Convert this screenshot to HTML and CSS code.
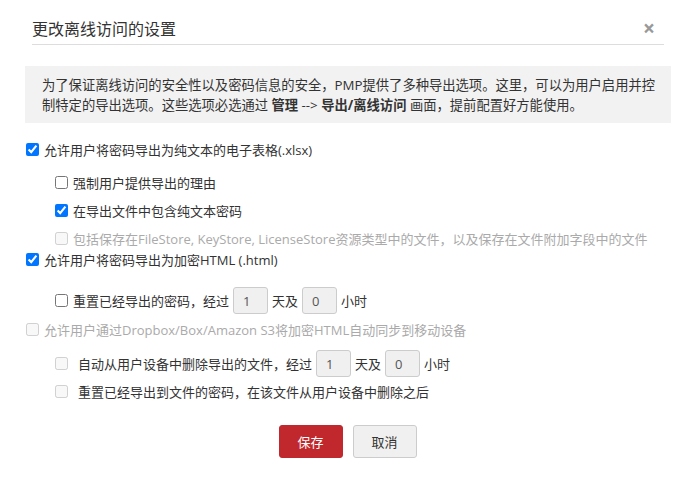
FILE: index.html
```html
<!DOCTYPE html>
<html lang="zh-CN">
<head>
  <meta charset="UTF-8" />
  <meta name="viewport" content="width=device-width, initial-scale=1" />
  <title>更改离线访问的设置</title>
  <link rel="stylesheet" href="styles.css">
</head>
<body>
  <div class="modal">
    <div class="modal-header">
      <span class="modal-title">更改离线访问的设置</span>
      <span class="close">&times;</span>
    </div>

    <div class="info">
      为了保证离线访问的安全性以及密码信息的安全，PMP提供了多种导出选项。这里，可以为用户启用并控<br>制特定的导出选项。这些选项必选通过 <b>管理</b> --&gt; <b>导出/离线访问</b> 画面，提前配置好方能使用。
    </div>

    <div class="options">
      <label class="opt"><input type="checkbox" checked> 允许用户将密码导出为纯文本的电子表格(.xlsx)</label>
      <div class="sub">
        <label class="opt"><input type="checkbox"> 强制用户提供导出的理由</label>
        <label class="opt"><input type="checkbox" checked> 在导出文件中包含纯文本密码</label>
        <label class="opt disabled"><input type="checkbox" disabled> 包括保存在FileStore, KeyStore, LicenseStore资源类型中的文件，以及保存在文件附加字段中的文件</label>
      </div>

      <label class="opt"><input type="checkbox" checked> 允许用户将密码导出为加密HTML (.html)</label>
      <div class="sub sub-reset">
        <label class="opt tall"><input type="checkbox"> 重置已经导出的密码，经过 <input class="num" type="text" value="1"> 天及 <input class="num" type="text" value="0"> 小时</label>
      </div>

      <label class="opt disabled"><input type="checkbox" disabled> 允许用户通过Dropbox/Box/Amazon S3将加密HTML自动同步到移动设备</label>
      <div class="sub sub-mobile">
        <label class="opt tall wide"><input type="checkbox" disabled> 自动从用户设备中删除导出的文件，经过 <input class="num" type="text" value="1"> 天及 <input class="num" type="text" value="0"> 小时</label>
        <label class="opt wide"><input type="checkbox" disabled> 重置已经导出到文件的密码，在该文件从用户设备中删除之后</label>
      </div>
    </div>

    <div class="actions">
      <button class="btn btn-save">保存</button>
      <button class="btn btn-cancel">取消</button>
    </div>
  </div>
</body>
</html>
```

FILE: styles.css
```css
* { box-sizing: border-box; }
html, body {
  margin: 0;
  padding: 0;
  background: #fff;
  color: #333;
  font-family: "Open Sans", "Noto Sans CJK SC", sans-serif;
  font-size: 13px;
}
.modal-header {
  margin: 0 31px 0 32px;
  padding-top: 11px;
  height: 45px;
  display: flex;
  justify-content: space-between;
  align-items: center;
  border-bottom: 1px solid #ddd;
}
.modal-header > * {
  height: 33px;
  display: flex;
  align-items: center;
}
.modal-title {
  font-size: 16px;
  color: #333;
}
.close {
  font-size: 21px;
  font-weight: bold;
  color: #999;
  margin-right: 9px;
  margin-top: 1px;
}
.info {
  margin: 21px 24px 0 25px;
  padding: 9px 10px 8px 17px;
  background: #f2f2f2;
  line-height: 20px;
  font-size: 13.3px;
  color: #333;
}
.info b { font-weight: bold; }
.options {
  margin-top: 16px;
  padding-left: 26px;
  display: flex;
  flex-direction: column;
}
.opt {
  display: flex;
  align-items: center;
  height: 20px;
  white-space: nowrap;
}
.opt input[type="checkbox"] {
  width: 13px;
  height: 13px;
  margin: 0 5px 0 0;
}
.opt.wide input[type="checkbox"] { margin-right: 10px; }
.opt.tall { height: 27px; }
.opt.disabled { color: #aaa; }
.sub {
  padding-left: 29px;
  display: flex;
  flex-direction: column;
  gap: 8px;
  margin: 13px 0 1px;
}
.sub-reset { margin: 18px 0 5px; }
.sub-mobile { margin: 11px 0 0; gap: 4px; }
.num {
  width: 35px;
  height: 27px;
  margin: 0 4px;
  padding: 0 0 0 9px;
  border: 1px solid #ccc;
  border-radius: 3px;
  background: #f0f0f0;
  color: #555;
  font-family: "Open Sans", sans-serif;
  font-size: 13px;
}
.actions {
  margin-top: 24px;
  display: flex;
  justify-content: center;
  gap: 10px;
}
.btn {
  width: 64px;
  height: 33px;
  border-radius: 3px;
  font-family: "Open Sans", "Noto Sans CJK SC", sans-serif;
  font-size: 13px;
  cursor: pointer;
}
.btn-save {
  background: #c1282d;
  color: #fff;
  border: 1px solid #c1282d;
}
.btn-cancel {
  background: #f0f0f0;
  color: #333;
  border: 1px solid #ccc;
}
```
